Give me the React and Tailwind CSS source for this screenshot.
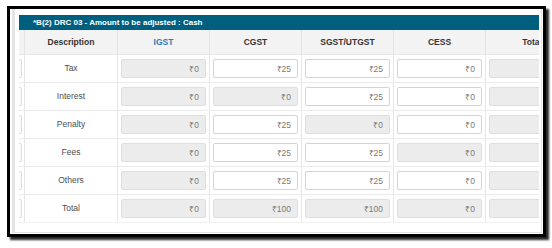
const font = { fontFamily: '"Liberation Sans Narrow", "Arial Narrow", "Liberation Sans", Arial, sans-serif' }

const rows = [
  { label: 'Tax', cells: [['₹0', true], ['₹25', false], ['₹25', false], ['₹0', false]] },
  { label: 'Interest', cells: [['₹0', true], ['₹0', true], ['₹25', false], ['₹0', false]] },
  { label: 'Penalty', cells: [['₹0', true], ['₹25', false], ['₹0', true], ['₹0', false]] },
  { label: 'Fees', cells: [['₹0', true], ['₹25', false], ['₹25', false], ['₹0', true]] },
  { label: 'Others', cells: [['₹0', true], ['₹25', false], ['₹25', false], ['₹0', false]] },
  { label: 'Total', cells: [['₹0', true], ['₹100', true], ['₹100', true], ['₹0', true]] },
]

function Amount({ value, disabled }) {
  return (
    <input
      readOnly
      value={value}
      className={
        'h-[19px] w-full rounded-[2px] border pr-[6px] text-right text-[8.5px] text-[#7a7a7a] outline-none ' +
        (disabled ? 'border-[#dedede] bg-[#ececec]' : 'border-[#d4d4d4] bg-white')
      }
      style={font}
    />
  )
}

export default function App() {
  return (
    <div className="h-[248px] w-[552px] bg-white pl-[7px] pt-[6px]" style={font}>
      <div className="h-[231px] w-[539px] border-[3px] border-black bg-white shadow-[3px_3px_2px_rgba(0,0,0,0.85)]">
        <div className="ml-[2px] h-[224px] w-[530px] border-b border-l-[3px] border-r border-[#e4e4e4] pb-[9px] pl-[4px] pr-[2px] pt-[6px]">
          <div className="w-[520px] overflow-hidden">
            <div className="flex h-[15px] items-center bg-[#005f7f] pl-[14px] text-[8px] font-bold text-white">
              *B(2) DRC 03 - Amount to be adjusted : Cash
            </div>

            <div className="flex h-[25px] w-[559px] border-b border-[#e6e6e6] bg-[#f3f3f3] text-[8.5px] font-bold text-[#333]">
              <div className="w-[6px] shrink-0 border-r border-[#e3e3e3]" />
              <div className="flex w-[93px] shrink-0 items-center justify-center border-r border-[#e3e3e3]">Description</div>
              <div className="flex w-[92px] shrink-0 items-center justify-center border-r border-[#e3e3e3] text-[#2f7ab8]">IGST</div>
              <div className="flex w-[92px] shrink-0 items-center justify-center border-r border-[#e3e3e3]">CGST</div>
              <div className="flex w-[92px] shrink-0 items-center justify-center border-r border-[#e3e3e3]">SGST/UTGST</div>
              <div className="flex w-[92px] shrink-0 items-center justify-center border-r border-[#e3e3e3]">CESS</div>
              <div className="flex w-[92px] shrink-0 items-center justify-center">Total</div>
            </div>

            {rows.map((r) => (
              <div key={r.label} className="flex h-[28px] w-[559px] border-b border-[#ebebeb] last:border-b-[#f0f0f0]">
                <div className="flex w-[6px] shrink-0 items-center justify-end overflow-hidden border-r border-[#e6e6e6] pr-[2px]">
                  <div className="h-[19px] w-[4px] shrink-0 rounded-r-[2px] border border-l-0 border-[#dcdcdc] bg-[#fafafa]" />
                </div>
                <div className="flex w-[93px] shrink-0 items-center justify-center border-r border-[#e6e6e6] text-[8.5px] text-[#4d4d4d]">
                  {r.label}
                </div>
                {r.cells.map(([v, d], i) => (
                  <div key={i} className="flex w-[92px] shrink-0 items-center border-r border-[#e6e6e6] px-[3px]">
                    <Amount value={v} disabled={d} />
                  </div>
                ))}
                <div className="flex w-[92px] shrink-0 items-center px-[3px]">
                  <Amount value="₹0" disabled />
                </div>
              </div>
            ))}
          </div>
        </div>
      </div>
    </div>
  )
}
